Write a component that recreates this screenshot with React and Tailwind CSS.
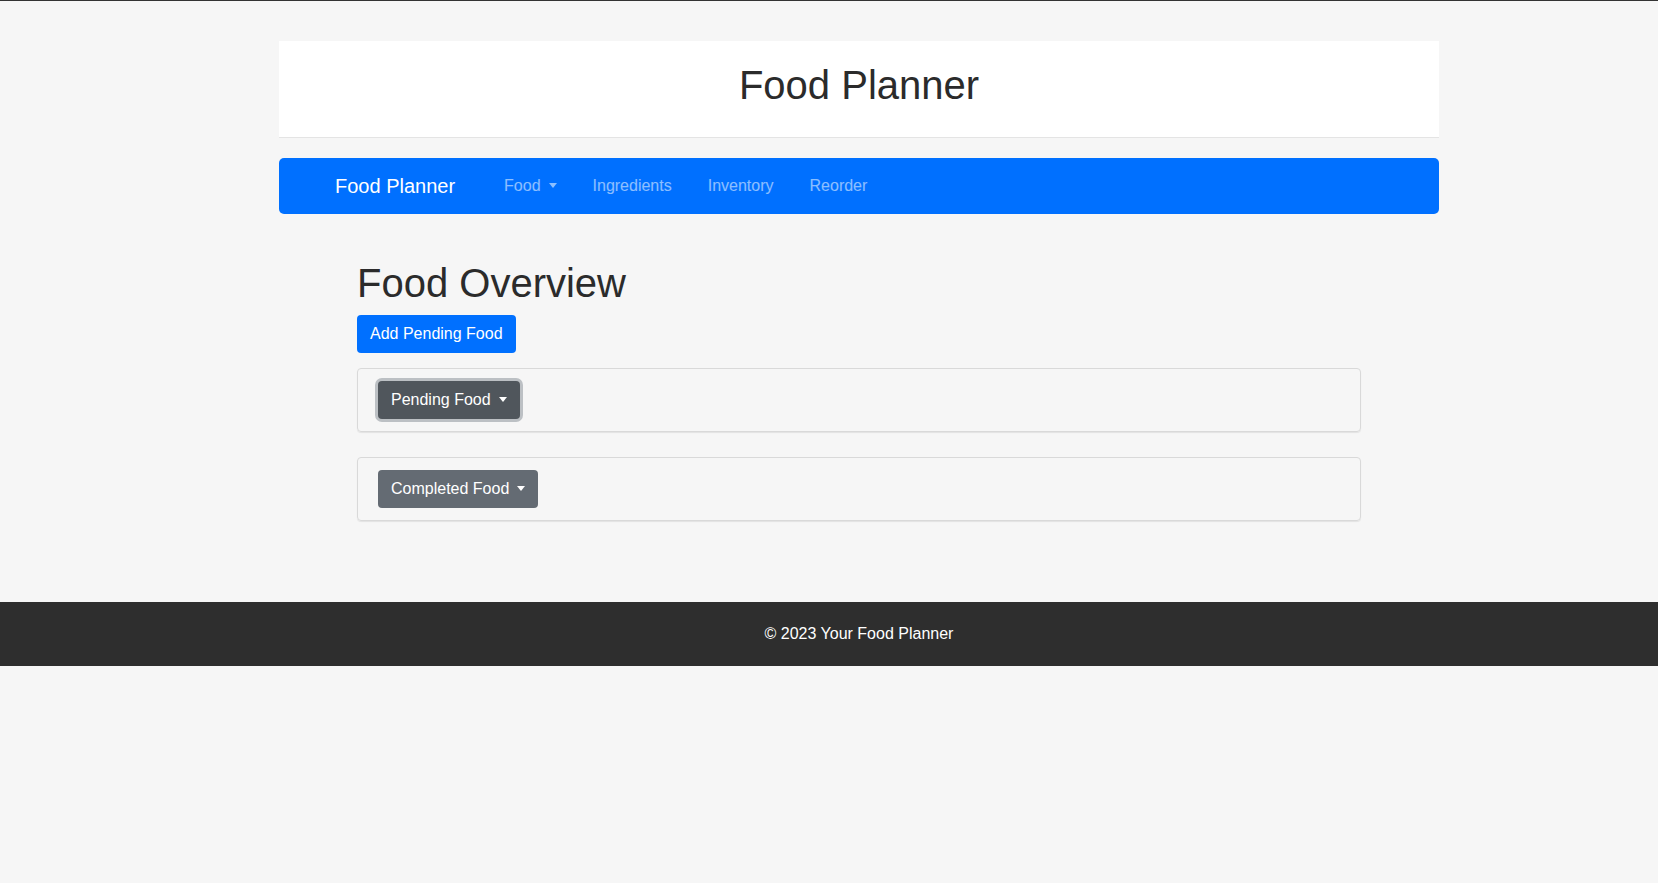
import React from "react";

const Caret = () => (
  <span className="ml-2 inline-block h-0 w-0 border-x-[4px] border-t-[5px] border-x-transparent border-t-current align-[0.2em]" />
);

const NavLink = ({ children, caret }) => (
  <a href="#" className="px-[18px] text-[16px] leading-6 text-white/55">
    {children}
    {caret && <Caret />}
  </a>
);

const FoodCard = ({ label, focused }) => (
  <div className="rounded border border-[#d9d9d9] px-5 py-3 shadow-[0_1px_1px_rgba(0,0,0,0.08)]">
    <button
      className={
        focused
          ? "rounded-[4px] bg-[#50565c] px-[13px] py-[7px] text-[16px] leading-6 text-white shadow-[0_0_0_3px_rgba(130,138,145,0.5)]"
          : "rounded-[4px] bg-[#646b73] px-[13px] py-[7px] text-[16px] leading-6 text-white"
      }
    >
      {label}
      <Caret />
    </button>
  </div>
);

export default function App() {
  return (
    <div className="min-h-screen overflow-hidden border-t border-[#333] bg-[#f6f6f6] font-['Liberation_Sans',Arial,sans-serif] text-[#2b2b2b]">
      <div className="w-[1718px]">
        {/* page header */}
        <div className="mx-auto mt-10 w-[1160px] border-b border-[#e4e4e4] bg-white py-5 text-center">
          <h1 className="mb-2 text-[40px] leading-[48px]">Food Planner</h1>
        </div>

        {/* navbar */}
        <nav className="mx-auto mt-5 flex h-14 w-[1160px] items-center rounded-[5px] bg-[#0070ff] pl-[56px]">
          <a href="#" className="text-[20px] leading-[30px] text-white">
            Food Planner
          </a>
          <div className="ml-[31px] flex items-center">
            <NavLink caret>Food</NavLink>
            <NavLink>Ingredients</NavLink>
            <NavLink>Inventory</NavLink>
            <NavLink>Reorder</NavLink>
          </div>
        </nav>

        {/* main */}
        <main className="mx-auto mt-[45px] w-[1004px]">
          <h1 className="mb-2 text-[40px] leading-[48px]">Food Overview</h1>
          <button className="rounded-[4px] bg-[#0070ff] px-[13px] py-[7px] text-[16px] leading-6 text-white">
            Add Pending Food
          </button>
          <div className="mt-[15px]">
            <FoodCard label="Pending Food" focused />
          </div>
          <div className="mt-[25px]">
            <FoodCard label="Completed Food" />
          </div>
        </main>

        {/* footer */}
        <footer className="mt-[81px] bg-[#2e2e2e] py-5 text-center text-[16px] leading-6 text-white">
          © 2023 Your Food Planner
        </footer>
      </div>
    </div>
  );
}
